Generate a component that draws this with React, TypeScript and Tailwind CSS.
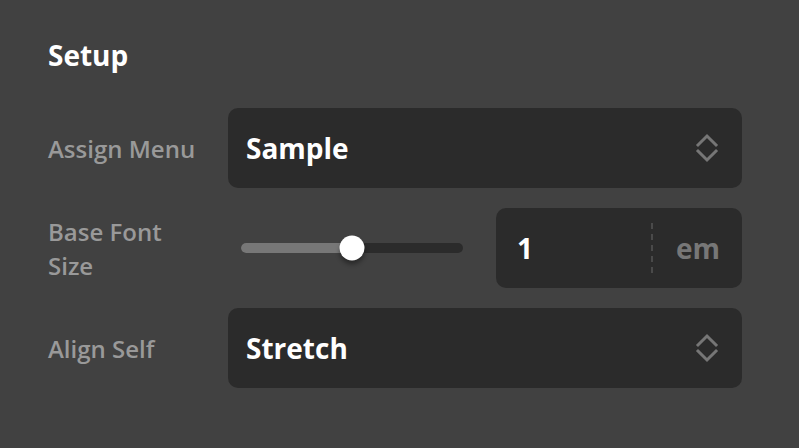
import React from 'react';

function UpDown() {
  return (
    <svg width="24" height="30" viewBox="0 0 24 30" fill="none" stroke="#767676" strokeWidth="3" strokeLinecap="square">
      <path d="M3 12 L12 3 L21 12" />
      <path d="M3 18 L12 27 L21 18" />
    </svg>
  );
}

function Select({ value }: { value: string }) {
  return (
    <div className="flex h-[80px] flex-1 items-center justify-between rounded-[10px] bg-[#2b2b2b] pl-[18px] pr-[23px]">
      <span className="text-[28px] font-bold text-white">{value}</span>
      <UpDown />
    </div>
  );
}

export default function App() {
  const pct = 50;

  return (
    <div className="min-h-screen w-full bg-[#414141] pl-12 pr-[57px] pt-[36px] font-['Open_Sans',sans-serif]">
      <h2 className="text-[28px] font-bold leading-[38px] text-white">Setup</h2>

      <div className="mt-[34px] flex flex-col gap-5">
        {/* Assign Menu */}
        <div className="flex items-center">
          <div className="w-[180px] pr-5 pt-[2px] text-[24px] font-semibold leading-[34px] text-[#999999]">Assign Menu</div>
          <Select value="Sample" />
        </div>

        {/* Base Font Size */}
        <div className="flex items-center">
          <div className="w-[180px] pr-5 pt-[2px] text-[24px] font-semibold leading-[34px] text-[#999999]">Base Font Size</div>
          <div className="flex flex-1 items-center">
            <div className="relative ml-[13px] mr-[33px] h-[10px] w-[222px] rounded-full bg-[#2b2b2b]">
              <div className="h-full rounded-full bg-[#777777]" style={{ width: `${pct}%` }} />
              <div className="absolute top-1/2 h-[25px] w-[25px] -translate-x-1/2 -translate-y-1/2 rounded-full bg-white shadow-[0_4px_4px_rgba(0,0,0,0.35)]" style={{ left: `${pct}%` }} />
            </div>
            <div className="flex h-[80px] flex-1 items-center rounded-[10px] bg-[#2b2b2b]">
              <span className="w-[155px] pl-[21px] text-[28px] font-bold text-white">1</span>
              <div className="h-[50px] border-l-2 border-dashed border-[#4a4a4a]" />
              <span className="flex-1 pr-[22px] text-right text-[28px] font-bold text-[#777777]">em</span>
            </div>
          </div>
        </div>

        {/* Align Self */}
        <div className="flex items-center">
          <div className="w-[180px] pr-5 pt-[2px] text-[24px] font-semibold leading-[34px] text-[#999999]">Align Self</div>
          <Select value="Stretch" />
        </div>
      </div>
    </div>
  );
}
